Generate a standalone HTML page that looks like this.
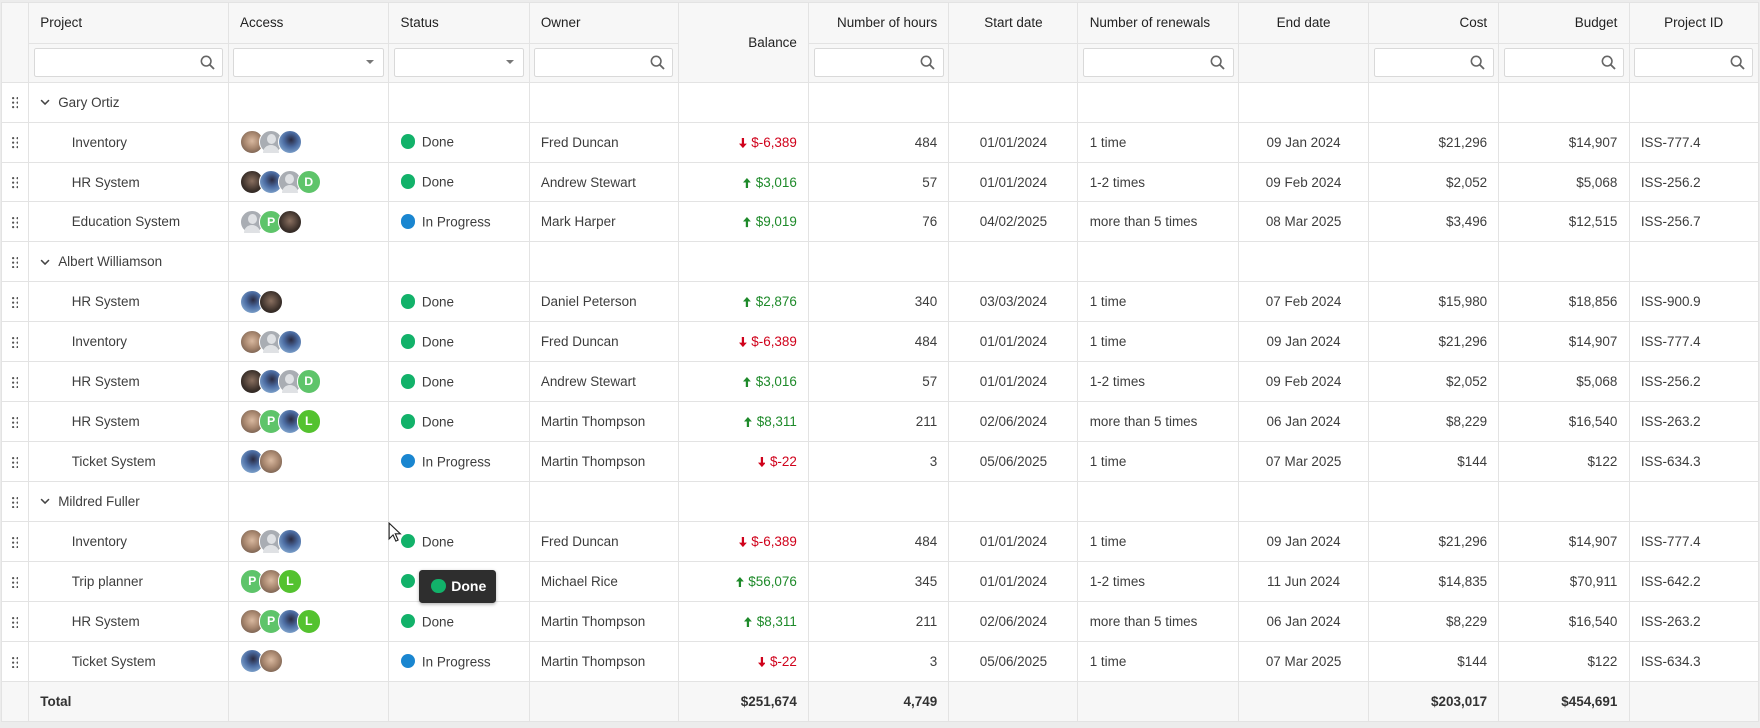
<!DOCTYPE html>
<html><head><meta charset="utf-8"><style>
html,body{margin:0;padding:0;background:#ececec;overflow:hidden}
#w{zoom:1.12245;width:1568px;height:649px;position:relative;background:#ececec;font-family:"Liberation Sans",sans-serif;font-size:12px;color:#3d3d3d}
table{position:absolute;left:1px;top:2px;width:1565px;border-collapse:collapse;table-layout:fixed;background:#fff}
td,th{border:1px solid #e3e3e3;padding:0 10px;white-space:nowrap;overflow:hidden}
th{background:#f7f7f7;font-weight:normal;color:#222;text-align:left;height:35px}
tr.f td{background:#f7f7f7;height:34px;padding:0 4px}
tbody tr td{height:34.7px}
td.d{padding:0;text-align:center;background:#fff}
.r{text-align:right}.c{text-align:center}
.inp{height:24px;border:1px solid #d9d9d9;background:#fff;border-radius:2px;position:relative}
.inp svg{position:absolute;right:6px;top:5px}
.inp .tri{position:absolute;right:8px;top:10px;width:0;height:0;border-left:4px solid transparent;border-right:4px solid transparent;border-top:4px solid #777}
.av{display:inline-block;width:20px;height:20px;border-radius:50%;margin-right:-5px;vertical-align:middle;border:1px solid #fff;position:relative;color:#fff;font-weight:bold;font-size:11px;text-align:center;line-height:20px}
.p1{background:radial-gradient(circle at 50% 45%,#d9b9a0 0,#a98870 45%,#5d4a3e 100%)}
.dk{background:radial-gradient(circle at 50% 45%,#8a7060 0,#3b302a 60%,#1e1a18 100%)}
.bl{background:radial-gradient(circle at 55% 40%,#2a2a40 0,#4a6aa0 40%,#9fc6e8 100%)}
.gr{background:#a9adb3}
.gr:after{content:"";position:absolute;left:6px;top:3px;width:8px;height:9px;border-radius:50%;background:#dfe1e4}
.gr:before{content:"";position:absolute;left:3px;top:13px;width:14px;height:7px;border-radius:7px 7px 0 0;background:#dfe1e4}
.lt{background:#5ec46a}.lt2{background:#54c22f}
.dot{display:inline-block;width:13px;height:13px;border-radius:50%;background:#12b26a;vertical-align:-2px;margin-right:6px}
.dot.b{background:#1a86d0}
.dn{color:#d0021b}.up{color:#1e8a2a}
.ar{display:inline-block;width:7px;height:9px;margin-right:4px;vertical-align:-1px}
.ft td{background:#f7f7f7;font-weight:bold;color:#333;height:35px}
.ind{padding-left:38px}
.gh{width:6px;height:10px;vertical-align:middle}
.chev{width:9px;height:6px;margin-right:7px;vertical-align:1px}
#tip{position:absolute;left:373px;top:508px;width:69px;height:29px;background:#2e2e2e;border-radius:3px;color:#fff;font-weight:bold;font-size:12.5px;line-height:29px;box-shadow:0 1px 3px rgba(0,0,0,.3)}
#tip .dot{margin-left:11px;margin-right:5px}
</style></head><body><div id="w">
<svg width="0" height="0" style="position:absolute"><defs><g id="hd"><circle cx="1" cy="1" r="1"/><circle cx="5" cy="1" r="1"/><circle cx="1" cy="5" r="1"/><circle cx="5" cy="5" r="1"/><circle cx="1" cy="9" r="1"/><circle cx="5" cy="9" r="1"/></g></defs></svg>
<table>
<colgroup><col style="width:24px"><col style="width:178px"><col style="width:143px"><col style="width:125px"><col style="width:133px"><col style="width:116px"><col style="width:125px"><col style="width:115px"><col style="width:143px"><col style="width:116px"><col style="width:116px"><col style="width:116px"><col style="width:115px"></colgroup>
<thead>
<tr><th rowspan="2"></th><th>Project</th><th>Access</th><th>Status</th><th>Owner</th><th rowspan="2" class="r" style="vertical-align:middle">Balance</th><th class="r">Number of hours</th><th class="c">Start date</th><th>Number of renewals</th><th class="c">End date</th><th class="r">Cost</th><th class="r">Budget</th><th class="c">Project ID</th></tr>
<tr class="f">
<td><div class="inp"><svg width="14" height="14" viewBox="0 0 14 14"><circle cx="5.5" cy="5.5" r="4.3" fill="none" stroke="#666" stroke-width="1.4"/><path d="M8.6 8.6L12.5 12.5" stroke="#666" stroke-width="1.6"/></svg></div></td>
<td><div class="inp"><span class="tri"></span></div></td>
<td><div class="inp"><span class="tri"></span></div></td>
<td><div class="inp"><svg width="14" height="14" viewBox="0 0 14 14"><circle cx="5.5" cy="5.5" r="4.3" fill="none" stroke="#666" stroke-width="1.4"/><path d="M8.6 8.6L12.5 12.5" stroke="#666" stroke-width="1.6"/></svg></div></td>
<td><div class="inp"><svg width="14" height="14" viewBox="0 0 14 14"><circle cx="5.5" cy="5.5" r="4.3" fill="none" stroke="#666" stroke-width="1.4"/><path d="M8.6 8.6L12.5 12.5" stroke="#666" stroke-width="1.6"/></svg></div></td>
<td></td>
<td><div class="inp"><svg width="14" height="14" viewBox="0 0 14 14"><circle cx="5.5" cy="5.5" r="4.3" fill="none" stroke="#666" stroke-width="1.4"/><path d="M8.6 8.6L12.5 12.5" stroke="#666" stroke-width="1.6"/></svg></div></td>
<td></td>
<td><div class="inp"><svg width="14" height="14" viewBox="0 0 14 14"><circle cx="5.5" cy="5.5" r="4.3" fill="none" stroke="#666" stroke-width="1.4"/><path d="M8.6 8.6L12.5 12.5" stroke="#666" stroke-width="1.6"/></svg></div></td>
<td><div class="inp"><svg width="14" height="14" viewBox="0 0 14 14"><circle cx="5.5" cy="5.5" r="4.3" fill="none" stroke="#666" stroke-width="1.4"/><path d="M8.6 8.6L12.5 12.5" stroke="#666" stroke-width="1.6"/></svg></div></td>
<td><div class="inp"><svg width="14" height="14" viewBox="0 0 14 14"><circle cx="5.5" cy="5.5" r="4.3" fill="none" stroke="#666" stroke-width="1.4"/><path d="M8.6 8.6L12.5 12.5" stroke="#666" stroke-width="1.6"/></svg></div></td>
</tr>
</thead>
<tbody>
<tr><td class="d"><svg class="gh" viewBox="0 0 6 10" fill="#555"><use href="#hd"/></svg></td><td style="padding-left:10px"><svg class="chev" viewBox="0 0 9 6"><path d="M1 1l3.5 3.5L8 1" fill="none" stroke="#444" stroke-width="1.4"/></svg>Gary Ortiz</td><td></td><td></td><td></td><td></td><td></td><td></td><td></td><td></td><td></td><td></td><td></td></tr>
<tr><td class="d"><svg class="gh" viewBox="0 0 6 10" fill="#555"><use href="#hd"/></svg></td><td class="ind">Inventory</td><td><span class="av p1"></span><span class="av gr"></span><span class="av bl"></span></td><td><span class="dot"></span>Done</td><td>Fred Duncan</td><td class="r dn"><svg class="ar" viewBox="0 0 7 9"><path d="M2.5 0h2v5h2.5L3.5 9 0 5h2.5z" fill="#d0021b"/></svg>$-6,389</td><td class="r">484</td><td class="c">01/01/2024</td><td>1 time</td><td class="c">09 Jan 2024</td><td class="r">$21,296</td><td class="r">$14,907</td><td>ISS-777.4</td></tr>
<tr><td class="d"><svg class="gh" viewBox="0 0 6 10" fill="#555"><use href="#hd"/></svg></td><td class="ind">HR System</td><td><span class="av dk"></span><span class="av bl"></span><span class="av gr"></span><span class="av lt">D</span></td><td><span class="dot"></span>Done</td><td>Andrew Stewart</td><td class="r up"><svg class="ar" viewBox="0 0 7 9"><path d="M2.5 9h2V4h2.5L3.5 0 0 4h2.5z" fill="#1e8a2a"/></svg>$3,016</td><td class="r">57</td><td class="c">01/01/2024</td><td>1-2 times</td><td class="c">09 Feb 2024</td><td class="r">$2,052</td><td class="r">$5,068</td><td>ISS-256.2</td></tr>
<tr><td class="d"><svg class="gh" viewBox="0 0 6 10" fill="#555"><use href="#hd"/></svg></td><td class="ind">Education System</td><td><span class="av gr"></span><span class="av lt">P</span><span class="av dk"></span></td><td><span class="dot b"></span>In Progress</td><td>Mark Harper</td><td class="r up"><svg class="ar" viewBox="0 0 7 9"><path d="M2.5 9h2V4h2.5L3.5 0 0 4h2.5z" fill="#1e8a2a"/></svg>$9,019</td><td class="r">76</td><td class="c">04/02/2025</td><td>more than 5 times</td><td class="c">08 Mar 2025</td><td class="r">$3,496</td><td class="r">$12,515</td><td>ISS-256.7</td></tr>
<tr><td class="d"><svg class="gh" viewBox="0 0 6 10" fill="#555"><use href="#hd"/></svg></td><td style="padding-left:10px"><svg class="chev" viewBox="0 0 9 6"><path d="M1 1l3.5 3.5L8 1" fill="none" stroke="#444" stroke-width="1.4"/></svg>Albert Williamson</td><td></td><td></td><td></td><td></td><td></td><td></td><td></td><td></td><td></td><td></td><td></td></tr>
<tr><td class="d"><svg class="gh" viewBox="0 0 6 10" fill="#555"><use href="#hd"/></svg></td><td class="ind">HR System</td><td><span class="av bl"></span><span class="av dk"></span></td><td><span class="dot"></span>Done</td><td>Daniel Peterson</td><td class="r up"><svg class="ar" viewBox="0 0 7 9"><path d="M2.5 9h2V4h2.5L3.5 0 0 4h2.5z" fill="#1e8a2a"/></svg>$2,876</td><td class="r">340</td><td class="c">03/03/2024</td><td>1 time</td><td class="c">07 Feb 2024</td><td class="r">$15,980</td><td class="r">$18,856</td><td>ISS-900.9</td></tr>
<tr><td class="d"><svg class="gh" viewBox="0 0 6 10" fill="#555"><use href="#hd"/></svg></td><td class="ind">Inventory</td><td><span class="av p1"></span><span class="av gr"></span><span class="av bl"></span></td><td><span class="dot"></span>Done</td><td>Fred Duncan</td><td class="r dn"><svg class="ar" viewBox="0 0 7 9"><path d="M2.5 0h2v5h2.5L3.5 9 0 5h2.5z" fill="#d0021b"/></svg>$-6,389</td><td class="r">484</td><td class="c">01/01/2024</td><td>1 time</td><td class="c">09 Jan 2024</td><td class="r">$21,296</td><td class="r">$14,907</td><td>ISS-777.4</td></tr>
<tr><td class="d"><svg class="gh" viewBox="0 0 6 10" fill="#555"><use href="#hd"/></svg></td><td class="ind">HR System</td><td><span class="av dk"></span><span class="av bl"></span><span class="av gr"></span><span class="av lt">D</span></td><td><span class="dot"></span>Done</td><td>Andrew Stewart</td><td class="r up"><svg class="ar" viewBox="0 0 7 9"><path d="M2.5 9h2V4h2.5L3.5 0 0 4h2.5z" fill="#1e8a2a"/></svg>$3,016</td><td class="r">57</td><td class="c">01/01/2024</td><td>1-2 times</td><td class="c">09 Feb 2024</td><td class="r">$2,052</td><td class="r">$5,068</td><td>ISS-256.2</td></tr>
<tr><td class="d"><svg class="gh" viewBox="0 0 6 10" fill="#555"><use href="#hd"/></svg></td><td class="ind">HR System</td><td><span class="av p1"></span><span class="av lt">P</span><span class="av bl"></span><span class="av lt2">L</span></td><td><span class="dot"></span>Done</td><td>Martin Thompson</td><td class="r up"><svg class="ar" viewBox="0 0 7 9"><path d="M2.5 9h2V4h2.5L3.5 0 0 4h2.5z" fill="#1e8a2a"/></svg>$8,311</td><td class="r">211</td><td class="c">02/06/2024</td><td>more than 5 times</td><td class="c">06 Jan 2024</td><td class="r">$8,229</td><td class="r">$16,540</td><td>ISS-263.2</td></tr>
<tr><td class="d"><svg class="gh" viewBox="0 0 6 10" fill="#555"><use href="#hd"/></svg></td><td class="ind">Ticket System</td><td><span class="av bl"></span><span class="av p1"></span></td><td><span class="dot b"></span>In Progress</td><td>Martin Thompson</td><td class="r dn"><svg class="ar" viewBox="0 0 7 9"><path d="M2.5 0h2v5h2.5L3.5 9 0 5h2.5z" fill="#d0021b"/></svg>$-22</td><td class="r">3</td><td class="c">05/06/2025</td><td>1 time</td><td class="c">07 Mar 2025</td><td class="r">$144</td><td class="r">$122</td><td>ISS-634.3</td></tr>
<tr><td class="d"><svg class="gh" viewBox="0 0 6 10" fill="#555"><use href="#hd"/></svg></td><td style="padding-left:10px"><svg class="chev" viewBox="0 0 9 6"><path d="M1 1l3.5 3.5L8 1" fill="none" stroke="#444" stroke-width="1.4"/></svg>Mildred Fuller</td><td></td><td></td><td></td><td></td><td></td><td></td><td></td><td></td><td></td><td></td><td></td></tr>
<tr><td class="d"><svg class="gh" viewBox="0 0 6 10" fill="#555"><use href="#hd"/></svg></td><td class="ind">Inventory</td><td><span class="av p1"></span><span class="av gr"></span><span class="av bl"></span></td><td><span class="dot"></span>Done</td><td>Fred Duncan</td><td class="r dn"><svg class="ar" viewBox="0 0 7 9"><path d="M2.5 0h2v5h2.5L3.5 9 0 5h2.5z" fill="#d0021b"/></svg>$-6,389</td><td class="r">484</td><td class="c">01/01/2024</td><td>1 time</td><td class="c">09 Jan 2024</td><td class="r">$21,296</td><td class="r">$14,907</td><td>ISS-777.4</td></tr>
<tr><td class="d"><svg class="gh" viewBox="0 0 6 10" fill="#555"><use href="#hd"/></svg></td><td class="ind">Trip planner</td><td><span class="av lt">P</span><span class="av p1"></span><span class="av lt2">L</span></td><td><span class="dot"></span>Done</td><td>Michael Rice</td><td class="r up"><svg class="ar" viewBox="0 0 7 9"><path d="M2.5 9h2V4h2.5L3.5 0 0 4h2.5z" fill="#1e8a2a"/></svg>$56,076</td><td class="r">345</td><td class="c">01/01/2024</td><td>1-2 times</td><td class="c">11 Jun 2024</td><td class="r">$14,835</td><td class="r">$70,911</td><td>ISS-642.2</td></tr>
<tr><td class="d"><svg class="gh" viewBox="0 0 6 10" fill="#555"><use href="#hd"/></svg></td><td class="ind">HR System</td><td><span class="av p1"></span><span class="av lt">P</span><span class="av bl"></span><span class="av lt2">L</span></td><td><span class="dot"></span>Done</td><td>Martin Thompson</td><td class="r up"><svg class="ar" viewBox="0 0 7 9"><path d="M2.5 9h2V4h2.5L3.5 0 0 4h2.5z" fill="#1e8a2a"/></svg>$8,311</td><td class="r">211</td><td class="c">02/06/2024</td><td>more than 5 times</td><td class="c">06 Jan 2024</td><td class="r">$8,229</td><td class="r">$16,540</td><td>ISS-263.2</td></tr>
<tr><td class="d"><svg class="gh" viewBox="0 0 6 10" fill="#555"><use href="#hd"/></svg></td><td class="ind">Ticket System</td><td><span class="av bl"></span><span class="av p1"></span></td><td><span class="dot b"></span>In Progress</td><td>Martin Thompson</td><td class="r dn"><svg class="ar" viewBox="0 0 7 9"><path d="M2.5 0h2v5h2.5L3.5 9 0 5h2.5z" fill="#d0021b"/></svg>$-22</td><td class="r">3</td><td class="c">05/06/2025</td><td>1 time</td><td class="c">07 Mar 2025</td><td class="r">$144</td><td class="r">$122</td><td>ISS-634.3</td></tr>
<tr class="ft"><td></td><td>Total</td><td></td><td></td><td></td><td class="r">$251,674</td><td class="r">4,749</td><td></td><td></td><td></td><td class="r">$203,017</td><td class="r">$454,691</td><td></td></tr>
</tbody></table>
<div id="tip"><span class="dot"></span>Done</div>
<svg style="position:absolute;left:346px;top:465px" width="12" height="18" viewBox="0 0 12 18"><path d="M1 1v14l3.5-3.5 2.5 5.5 2-1-2.5-5.5H11z" fill="#fff" stroke="#222" stroke-width="1"/></svg>
</div></body></html>
